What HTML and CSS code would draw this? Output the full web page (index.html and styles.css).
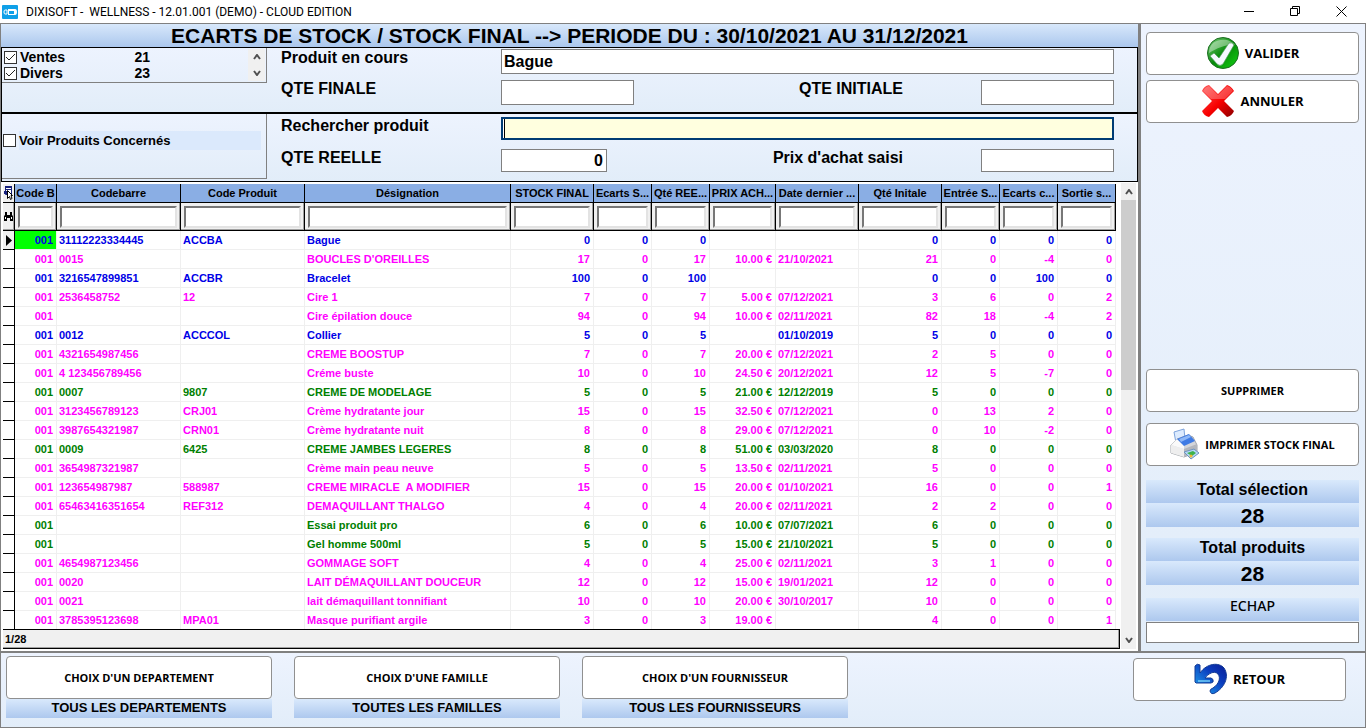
FILE: index.html
```
<!DOCTYPE html>
<html lang="fr">

<head>
    <meta charset="UTF-8">
    <meta name="viewport" content="width=device-width, initial-scale=1.0">
    <title>DIXISOFT - WELLNESS</title>
    <link rel="stylesheet" href="styles.css">
</head>

<body>
    <header class="titlebar">
        <svg class="app-icon" width="16" height="14" viewBox="0 0 16 14">
            <rect width="16" height="14" rx="1" fill="#0fa0e8" />
            <path d="M6 4h7q2 0 2 3t-2 3H6z" fill="#fff" />
            <rect x="7" y="6" width="5" height="3" fill="#0fa0e8" />
            <path d="M5 5H3q-1 0-1 2t1 2h2z" fill="none" stroke="#fff" />
        </svg>
        <span class="app-name">DIXISOFT -&nbsp; WELLNESS - 12.01.001 (DEMO) - CLOUD EDITION</span>
        <div class="window-buttons">
            <button type="button" aria-label="Réduire"><svg width="11" height="11"><path d="M0 5.500h10" stroke="#000" /></svg></button>
            <button type="button" aria-label="Restaurer"><svg width="11" height="11" fill="none" stroke="#000"><path d="M.5 2.500h7v7h-7zM2.500 2.500v-2h7v7h-2" /></svg></button>
            <button type="button" aria-label="Fermer"><svg width="11" height="11" stroke="#000"><path d="M.5.5l10 10M10.500.5l-10 10" /></svg></button>
        </div>
    </header>

    <main class="window">
        <div class="top">
            <section class="work">
                <h1 class="banner">ECARTS DE STOCK / STOCK FINAL --&gt; PERIODE DU : 30/10/2021 AU 31/12/2021</h1>

                <div class="panel panel-product">
                    <div class="side-box">
                        <div class="type-list">
                            <div class="types">
                                <label class="type"><input type="checkbox" class="check" checked><span>Ventes</span><span class="type-count">21</span></label>
                                <label class="type"><input type="checkbox" class="check" checked><span>Divers</span><span class="type-count">23</span></label>
                            </div>
                            <div class="mini-scroll">
                                <svg width="8" height="6"><path d="M1 5l3-4 3 4" /></svg>
                                <svg width="8" height="6"><path d="M1 1l3 4 3-4" /></svg>
                            </div>
                        </div>
                    </div>
                    <div class="fields">
                        <label for="produit">Produit en cours</label>
                        <input id="produit" class="field wide" type="text" value="Bague">
                        <label for="qte-finale">QTE FINALE</label>
                        <input id="qte-finale" class="field" type="text">
                        <label for="qte-initiale" class="label-right">QTE INITIALE</label>
                        <input id="qte-initiale" class="field" type="text">
                    </div>
                </div>

                <div class="panel panel-search">
                    <div class="side-box boxed">
                        <label class="concerned"><input type="checkbox" class="check"><span>Voir Produits Concernés</span></label>
                    </div>
                    <div class="fields">
                        <label for="recherche">Rechercher produit</label>
                        <input id="recherche" class="field wide active" type="text">
                        <label for="qte-reelle">QTE REELLE</label>
                        <input id="qte-reelle" class="field short" type="text" value="0">
                        <label for="prix" class="label-right">Prix d'achat saisi</label>
                        <input id="prix" class="field" type="text">
                    </div>
                </div>

                <div class="grid-area">
                    <div class="grid-main">
                        <table class="stock">
                            <colgroup>
                                <col class="w-mark"><col class="w-code"><col class="w-ref"><col class="w-ref"><col>
                                <col class="w-date"><col class="w-num"><col class="w-num"><col class="w-price"><col class="w-date">
                                <col class="w-date"><col class="w-num"><col class="w-num"><col class="w-num">
                            </colgroup>
                            <thead>
                                <tr class="heads">
                                    <th class="mark">
                                        <svg width="9" height="16" viewBox="0 0 9 16">
                                            <path d="M1.500 1.500h6v8h-6z" fill="#fff" stroke="#16217c" />
                                            <path d="M1 1h7v2H1zM2 4h5v1H2zM0 6h4v3H0z" fill="#16217c" />
                                            <path d="M3.500 5.500v8l2-2 1 3 1.500-1-1-3h1.500z" fill="#fff" stroke="#000" />
                                        </svg>
                                    </th>
                                    <th>Code B</th>
                                    <th>Codebarre</th>
                                    <th>Code Produit</th>
                                    <th>Désignation</th>
                                    <th>STOCK FINAL</th>
                                    <th>Ecarts S...</th>
                                    <th>Qté REE...</th>
                                    <th>PRIX ACH...</th>
                                    <th>Date dernier ...</th>
                                    <th>Qté Initale</th>
                                    <th>Entrée S...</th>
                                    <th>Ecarts c...</th>
                                    <th>Sortie s...</th>
                                </tr>
                                <tr class="filters" id="filters">
                                    <td class="mark">
                                        <svg width="9" height="10" viewBox="0 0 9 10">
                                            <path d="M1 0h2v3h3V0h2v3l1 1v5H6V6H3v3H0V4l1-1z" fill="#000" />
                                            <path d="M1 5h1v2H1zM7 5h1v2H7z" fill="#fff" />
                                        </svg>
                                    </td>
                                </tr>
                            </thead>
                            <tbody id="rows"></tbody>
                        </table>
                        <div class="counter">1/28</div>
                    </div>
                    <div class="scroll">
                        <svg width="8" height="6"><path d="M1 5l3-4 3 4" /></svg>
                        <div class="track"><div class="thumb"></div></div>
                        <svg width="8" height="6"><path d="M1 1l3 4 3-4" /></svg>
                    </div>
                </div>
            </section>

            <aside class="actions">
                <button type="button" class="btn btn-big">
                    <svg width="34" height="34" viewBox="0 0 34 34">
                        <defs>
                            <linearGradient id="green" x1="0" y1="0" x2="1" y2="1">
                                <stop offset="0" stop-color="#7fd07f" />
                                <stop offset=".5" stop-color="#068a0a" />
                                <stop offset="1" stop-color="#12d412" />
                            </linearGradient>
                        </defs>
                        <circle cx="17" cy="17" r="15.500" fill="url(#green)" stroke="#1c6e22" />
                        <path d="M3 17C3 1 24 1 29 9 20 8 12 12 3 17z" fill="#fff" opacity=".4" />
                        <path d="M4 20l4-3 5 5L23 7q3-1 5 2L17 28q-3 3-6 0z" fill="#f4f8ff" stroke="#4c9a54" stroke-width=".7" />
                    </svg>
                    VALIDER
                </button>
                <button type="button" class="btn btn-big">
                    <svg width="34" height="34" viewBox="0 0 34 34">
                        <defs>
                            <linearGradient id="red" x1="0" y1="0" x2="1" y2="1">
                                <stop offset="0" stop-color="#ff5050" />
                                <stop offset=".55" stop-color="#f80000" />
                                <stop offset="1" stop-color="#8c0000" />
                            </linearGradient>
                        </defs>
                        <path d="M8 1l9 9 9-9q4 1 7 6l-10 10 10 10q-2 5-7 6l-9-9-9 9q-5-1-7-6l10-10L1 7q2-5 7-6z" fill="url(#red)" />
                        <path d="M8 2l9 9 9-9q4 1 6 5l-8 8H10L2 7q2-4 6-5z" fill="#fff" opacity=".25" />
                    </svg>
                    ANNULER
                </button>
                <button type="button" class="btn btn-delete">SUPPRIMER</button>
                <button type="button" class="btn btn-print">
                    <svg width="30" height="32" viewBox="0 0 30 32">
                        <path d="M4 4l10-3 1 10-9 4z" fill="#dcebff" stroke="#7ea4dc" />
                        <path d="M1 17l6-6 11-4 5 2 4 8v7L14 29 1 25z" fill="#d4d6da" stroke="#a0a4aa" />
                        <path d="M1 17l13 4v8L1 25z" fill="#eeeeee" />
                        <path d="M14 21l13-5v8l-13 5z" fill="#b4b7bd" />
                        <path d="M1 17l6-6 7 6 0 4z" fill="#fafafa" />
                        <path d="M7 11l12-5 6 7-11 5z" fill="#3f7be4" />
                        <path d="M9 11l10-4 2 2-10 5z" fill="#8eb8f8" />
                        <path d="M14 24l10-3 5 4-8 6z" fill="#b4d8f8" stroke="#6e93bd" />
                        <path d="M17 25l6-2 3 2-4 3z" fill="#3db34c" />
                        <circle cx="21" cy="28" r="1.500" fill="#f2b632" />
                    </svg>
                    IMPRIMER STOCK FINAL
                </button>
                <div class="total">
                    <div class="strip total-name">Total sélection</div>
                    <div class="strip total-value">28</div>
                </div>
                <div class="total">
                    <div class="strip total-name">Total produits</div>
                    <div class="strip total-value">28</div>
                </div>
                <label class="strip escape" for="echap">ECHAP</label>
                <input id="echap" class="field escape-field" type="text">
            </aside>
        </div>

        <footer class="bottom">
            <div class="choice">
                <button type="button" class="btn">CHOIX D'UN DEPARTEMENT</button>
                <div class="strip choice-name">TOUS LES DEPARTEMENTS</div>
            </div>
            <div class="choice">
                <button type="button" class="btn">CHOIX D'UNE FAMILLE</button>
                <div class="strip choice-name">TOUTES LES FAMILLES</div>
            </div>
            <div class="choice">
                <button type="button" class="btn">CHOIX D'UN FOURNISSEUR</button>
                <div class="strip choice-name">TOUS LES FOURNISSEURS</div>
            </div>
            <button type="button" class="btn btn-big btn-back">
                <svg width="34" height="32" viewBox="0 0 34 32">
                    <defs>
                        <linearGradient id="blue" x1="1" y1="0" x2="0" y2="1">
                            <stop offset="0" stop-color="#0a1c94" />
                            <stop offset=".4" stop-color="#0b3fc0" />
                            <stop offset="1" stop-color="#22b0f4" />
                        </linearGradient>
                    </defs>
                    <path d="M1 3q2-3 5-1v8C13 0 25-1 30 5c6 9 0 20-9 25q-4 2-5-2 0-2 3-3c6-4 8-10 5-14-4-4-10 0-13 4h6q3 1 2 4l-2 1H2l-1-1z" fill="url(#blue)" stroke="#123a94" />
                    <path d="M4 18h12" stroke="#8be4ff" stroke-width="2" opacity=".6" />
                </svg>
                RETOUR
            </button>
        </footer>
    </main>

    <script>
        // couleur, codebarre, code produit, désignation, stock final, écart, qté réelle, prix, date, initiale, entrée, écart c., sortie
        const rows = [
            ["blue", "31112223334445", "ACCBA", "Bague", 0, 0, 0, "", "", 0, 0, 0, 0],
            ["pink", "0015", "", "BOUCLES D'OREILLES", 17, 0, 17, "10.00 €", "21/10/2021", 21, 0, -4, 0],
            ["blue", "3216547899851", "ACCBR", "Bracelet", 100, 0, 100, "", "", 0, 0, 100, 0],
            ["pink", "2536458752", "12", "Cire 1", 7, 0, 7, "5.00 €", "07/12/2021", 3, 6, 0, 2],
            ["pink", "", "", "Cire épilation douce", 94, 0, 94, "10.00 €", "02/11/2021", 82, 18, -4, 2],
            ["blue", "0012", "ACCCOL", "Collier", 5, 0, 5, "", "01/10/2019", 5, 0, 0, 0],
            ["pink", "4321654987456", "", "CREME BOOSTUP", 7, 0, 7, "20.00 €", "07/12/2021", 2, 5, 0, 0],
            ["pink", "4 123456789456", "", "Créme buste", 10, 0, 10, "24.50 €", "20/12/2021", 12, 5, -7, 0],
            ["green", "0007", "9807", "CREME DE MODELAGE", 5, 0, 5, "21.00 €", "12/12/2019", 5, 0, 0, 0],
            ["pink", "3123456789123", "CRJ01", "Crème hydratante jour", 15, 0, 15, "32.50 €", "07/12/2021", 0, 13, 2, 0],
            ["pink", "3987654321987", "CRN01", "Crème hydratante nuit", 8, 0, 8, "29.00 €", "07/12/2021", 0, 10, -2, 0],
            ["green", "0009", "6425", "CREME JAMBES LEGERES", 8, 0, 8, "51.00 €", "03/03/2020", 8, 0, 0, 0],
            ["pink", "3654987321987", "", "Crème main peau neuve", 5, 0, 5, "13.50 €", "02/11/2021", 5, 0, 0, 0],
            ["pink", "123654987987", "588987", "CREME MIRACLE\u00a0 A MODIFIER", 15, 0, 15, "20.00 €", "01/10/2021", 16, 0, 0, 1],
            ["pink", "65463416351654", "REF312", "DEMAQUILLANT THALGO", 4, 0, 4, "20.00 €", "02/11/2021", 2, 2, 0, 0],
            ["green", "", "", "Essai produit pro", 6, 0, 6, "10.00 €", "07/07/2021", 6, 0, 0, 0],
            ["green", "", "", "Gel homme 500ml", 5, 0, 5, "15.00 €", "21/10/2021", 5, 0, 0, 0],
            ["pink", "4654987123456", "", "GOMMAGE SOFT", 4, 0, 4, "25.00 €", "02/11/2021", 3, 1, 0, 0],
            ["pink", "0020", "", "LAIT DÉMAQUILLANT DOUCEUR", 12, 0, 12, "15.00 €", "19/01/2021", 12, 0, 0, 0],
            ["pink", "0021", "", "lait démaquillant tonnifiant", 10, 0, 10, "20.00 €", "30/10/2017", 10, 0, 0, 0],
            ["pink", "3785395123698", "MPA01", "Masque purifiant argile", 3, 0, 3, "19.00 €", "", 4, 0, 0, 1]
        ];

        // filtres
        const heads = document.querySelectorAll(".heads th:not(.mark)");
        const filters = document.querySelector("#filters");
        heads.forEach(function (th) {
            const input = document.createElement("input");
            input.type = "text";
            input.className = "filter";
            input.setAttribute("aria-label", th.textContent);
            filters.insertCell().appendChild(input);
        });

        // lignes
        const body = document.querySelector("#rows");
        rows.forEach(function (row, i) {
            const tr = body.insertRow();
            tr.className = row[0];
            const mark = tr.insertCell();
            mark.className = "mark";
            if (i == 0) {
                mark.innerHTML = '<svg width="6" height="11"><path d="M0 0l6 5.500-6 5.500z"/></svg>';
                tr.classList.add("current");
            }
            const code = tr.insertCell();
            code.className = "num";
            code.textContent = "001";
            row.slice(1).forEach(function (value, c) {
                const td = tr.insertCell();
                td.textContent = value;
                // tout est aligné à droite sauf les textes et la date
                if (c > 2 && c != 7) td.className = "num";
            });
        });
    </script>
</body>

</html>
```
FILE: styles.css
```
* {
    box-sizing: border-box;
}

body {
    margin: 0;
    min-height: 100vh;
    display: flex;
    flex-direction: column;
    background: #fff;
    color: #000;
    font-family: "Liberation Sans", Arial, sans-serif;
}

button,
input {
    font: inherit;
    color: inherit;
}

/* barre de titre */
.titlebar {
    display: flex;
    align-items: center;
    height: 23px;
    padding-left: 2px;
}

.app-icon {
    margin-right: 8px;
}

.app-name {
    font: 12px Roboto, "Noto Sans", sans-serif;
}

.window-buttons {
    display: flex;
    margin-left: auto;
    padding-right: 2px;
}

.window-buttons button {
    width: 46px;
    height: 22px;
    padding: 0;
    border: 0;
    background: none;
}

.window {
    flex: 1;
    display: flex;
    flex-direction: column;
    border: 1px solid #808080;
}

.top {
    display: flex;
    border-bottom: 2px solid #808080;
}

.work {
    flex: 1;
    min-width: 0;
    display: flex;
    flex-direction: column;
}

.banner {
    margin: 0;
    height: 24px;
    line-height: 23px;
    border-bottom: 1px solid #000;
    background: linear-gradient(#d8e8fb, #abc7ed);
    font-size: 21px;
    text-align: center;
}

/* panneaux de saisie */
.panel {
    display: flex;
    border-left: 1px solid #000;
    border-right: 1px solid #000;
    background: linear-gradient(#edf3fe, #e2edf9);
}

.panel-product {
    height: 66px;
    border-bottom: 2px solid #000;
}

.panel-search {
    height: 68px;
    border-bottom: 1px solid #000;
}

.side-box {
    width: 265px;
}

.boxed {
    height: 65px;
    padding-top: 17px;
    border-right: 1px solid #808080;
    border-bottom: 1px solid #808080;
}

.type-list {
    display: flex;
    justify-content: space-between;
    height: 35px;
    padding: 1px 1px 1px 2px;
    border: 1px solid #808080;
    border-top: 0;
    border-left: 0;
}

.type {
    display: flex;
    align-items: center;
    height: 16px;
    gap: 3px;
    font-size: 14px;
    font-weight: bold;
}

.type-count {
    margin-left: auto;
}

.types {
    width: 146px;
}

.mini-scroll {
    width: 17px;
    display: flex;
    flex-direction: column;
    align-items: center;
    justify-content: space-around;
    background: #f0f0f0;
}

.mini-scroll path,
.scroll path {
    fill: none;
    stroke: #505050;
    stroke-width: 2;
}

.check {
    appearance: none;
    flex: none;
    width: 13px;
    height: 13px;
    margin: 0;
    border: 1px solid #333;
    background: #fff;
}

.check:checked {
    background: url("data:image/svg+xml,%3Csvg xmlns='http://www.w3.org/2000/svg' width='11' height='11'%3E%3Cpath d='M1 5l3 3 6-6' fill='none' stroke='%23222'/%3E%3C/svg%3E") #fff;
}

.concerned {
    display: flex;
    align-items: center;
    height: 19px;
    gap: 3px;
    margin-left: 1px;
    margin-right: 5px;
    font-size: 13px;
    font-weight: bold;
}

.concerned span {
    flex: 1;
    line-height: 19px;
    background: #dbe9fc;
}

.fields {
    flex: 1;
    display: grid;
    grid-template-columns: 220px 133px 1fr 133px;
    align-content: start;
    gap: 6px 0;
    padding: 1px 23px 0 14px;
    font-size: 16px;
    font-weight: bold;
    line-height: 18px;
}

.panel-search .fields {
    row-gap: 9px;
    padding-top: 3px;
}

.label-right {
    padding-right: 78px;
    text-align: right;
}

.field {
    width: 100%;
    height: 25px;
    padding: 0 2px;
    border: 1px solid #808080;
    background: #fff;
    outline: 0;
}

.wide {
    grid-column: 2 / -1;
}

.panel-search .field {
    height: 23px;
}

.panel-search .short {
    width: 106px;
    padding-right: 3px;
    text-align: right;
}

.field.active {
    border: 2px solid #003c74;
    background: linear-gradient(90deg, #fff 1px, #000 1px 2px, #ffffdf 2px);
}

/* tableau */
.grid-area {
    flex: 1;
    display: flex;
    gap: 1px;
    padding: 1px 2px 2px 2px;
    background: #fff;
}

.grid-main {
    flex: 1;
    min-width: 0;
    padding-top: 1px;
}

.stock {
    width: calc(100% - 4px);
    table-layout: fixed;
    border-collapse: separate;
    border-spacing: 0;
    font-size: 11px;
    font-weight: bold;
}

.w-mark { width: 12px; }
.w-code { width: 42px; }
.w-ref { width: 124px; }
.w-num { width: 58px; }
.w-price { width: 66px; }
.w-date { width: 83px; }

.stock th {
    height: 19px;
    padding: 0;
    border-right: 1px solid #000;
    border-bottom: 1px solid #000;
    background: #8aaee4;
    overflow: hidden;
    white-space: nowrap;
}

.stock td {
    height: 19px;
    padding: 0 2px;
    line-height: 18px;
    border-right: 1px solid #efefef;
    border-bottom: 1px solid #efefef;
    overflow: hidden;
    white-space: nowrap;
}

.stock tbody tr:last-child td {
    height: 18px;
    border-bottom: 0;
}

.stock .filters td {
    height: 28px;
    padding: 2px 3px;
    border-right: 1px solid #000;
    border-bottom: 1px solid #000;
    background: #f0f0f0;
    box-shadow: inset -1px -1px #a0a0a0;
}

.filter {
    display: block;
    width: 100%;
    height: 22px;
    padding: 0 2px;
    border: 2px solid #e3e3e3;
    border-top-color: #777;
    border-left-color: #777;
    background: #fff;
}

.stock .mark,
.stock .filters .mark {
    padding: 0;
    border-right: 1px solid #000;
    border-bottom: 1px solid #000;
    background: #fff;
    text-align: center;
}

.stock .mark svg {
    display: block;
    margin: 0 auto;
}

.stock .num {
    padding-right: 3px;
    text-align: right;
}

.blue { color: #0000e6; }
.pink { color: #f0f; }
.green { color: #008000; }

.stock .current .mark,
.stock .heads .mark,
.stock .filters .mark {
    background: #f0f0f0;
}

.current .mark svg {
    fill: #000;
}

.current td:nth-child(2) {
    background: #0f0;
}

.counter {
    height: 20px;
    padding-left: 2px;
    border: 1px solid #000;
    border-left: 0;
    background: #f0f0f0;
    box-shadow: inset -1px -1px #a0a0a0;
    font-size: 11px;
    font-weight: bold;
    line-height: 19px;
}

.scroll {
    width: 15px;
    display: flex;
    flex-direction: column;
    align-items: center;
    gap: 5px;
    padding: 6px 0;
    background: #f0f0f0;
}

.track {
    flex: 1;
    width: 100%;
}

.thumb {
    height: 44%;
    background: #cdcdcd;
}

/* colonne de droite */
.actions {
    width: 227px;
    display: flex;
    flex-direction: column;
    padding: 8px 6px 8px 5px;
    border-left: 3px solid #808080;
    background: linear-gradient(#edf3fe, #e2edf9);
}

.btn {
    display: flex;
    align-items: center;
    justify-content: center;
    gap: 5px;
    width: 100%;
    height: 43px;
    padding: 0 0 1px;
    border: 1px solid #909090;
    border-radius: 4px;
    background: #fff;
    font: bold 11px "Open Sans", "Noto Sans", sans-serif;
}

.btn-big {
    font-size: 13px;
}

.btn-big + .btn-big {
    margin-top: 5px;
}

.btn-delete {
    margin-top: auto;
}

.btn-print {
    margin-top: 11px;
}

.strip {
    display: block;
    background: linear-gradient(#d9e9fc, #adc8ee);
    text-align: center;
    font-weight: bold;
}

.total {
    margin-top: 11px;
}

.btn-print + .total {
    margin-top: 14px;
}

.total-name {
    height: 23px;
    line-height: 19px;
    font-size: 16px;
}

.total-value {
    height: 24px;
    line-height: 25px;
    font-size: 21px;
}

.escape {
    height: 23px;
    margin-top: 13px;
    margin-bottom: 1px;
    font: 500 14px/16px "Noto Sans", sans-serif;
}

.escape-field {
    height: 21px;
}

/* barre du bas */
.bottom {
    flex: 1;
    display: flex;
    align-items: flex-start;
    gap: 22px;
    padding: 3px 19px 8px 5px;
    background: linear-gradient(#edf3fe, #e2edf9);
}

.choice {
    width: 266px;
}

.choice-name {
    height: 19px;
    line-height: 17px;
    font-size: 13px;
}

.btn-back {
    width: 213px;
    margin-top: 2px;
    margin-left: auto;
}
```
